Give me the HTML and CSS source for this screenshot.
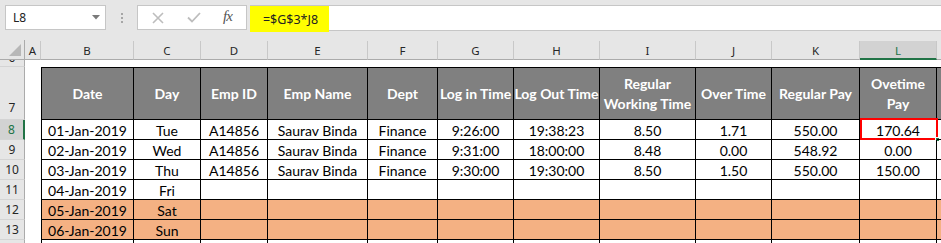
FILE: index.html
```html
<!DOCTYPE html>
<html>
<head>
<meta charset="utf-8">
<link rel="stylesheet" href="styles.css">
</head>
<body>
<div class="toolbar">
  <div class="namebox"><span>L8</span>
    <svg class="dd" width="8" height="5" viewBox="0 0 8 5"><path d="M0 0H8L4 4.5Z" fill="#7a7a7a"/></svg>
  </div>
  <div class="grip"><i></i><i></i><i></i></div>
  <div class="fbuttons">
    <svg class="fb-x" width="12" height="12" viewBox="0 0 12 12"><path d="M1 1L11 11M11 1L1 11" stroke="#bdbdbd" stroke-width="1.6" fill="none"/></svg>
    <svg class="fb-ok" width="14" height="11" viewBox="0 0 14 11"><path d="M1 5.5L5 9.5L13 1" stroke="#bdbdbd" stroke-width="1.8" fill="none"/></svg>
    <span class="fx">fx</span>
  </div>
  <div class="finput"><span class="formula">=$G$3*J8</span></div>
</div>

<div class="row colhead">
  <div class="corner"><svg width="12" height="12" viewBox="0 0 12 12"><path d="M12 0V12H0Z" fill="#b7b7b7"/></svg></div>
  <div class="ch">A</div><div class="ch">B</div><div class="ch">C</div><div class="ch">D</div><div class="ch">E</div><div class="ch">F</div><div class="ch">G</div><div class="ch">H</div><div class="ch">I</div><div class="ch">J</div><div class="ch">K</div><div class="ch sel">L</div><div class="ch"></div>
</div>

<div class="row r6">
  <div class="rh"><span>6</span></div>
</div>

<div class="row r7">
  <div class="rh"><span>7</span></div>
  <div class="ca"></div>
  <div class="c th first">Date</div>
  <div class="c th">Day</div>
  <div class="c th">Emp ID</div>
  <div class="c th">Emp Name</div>
  <div class="c th">Dept</div>
  <div class="c th">Log in Time</div>
  <div class="c th">Log Out Time</div>
  <div class="c th">Regular<br>Working Time</div>
  <div class="c th">Over Time</div>
  <div class="c th">Regular Pay</div>
  <div class="c th">Ovetime<br>Pay</div>
  <div class="c th"></div>
</div>

<div class="row">
  <div class="rh sel"><span>8</span></div>
  <div class="ca"></div>
  <div class="c first">01-Jan-2019</div>
  <div class="c">Tue</div>
  <div class="c">A14856</div>
  <div class="c">Saurav Binda</div>
  <div class="c">Finance</div>
  <div class="c">9:26:00</div>
  <div class="c">19:38:23</div>
  <div class="c">8.50</div>
  <div class="c">1.71</div>
  <div class="c">550.00</div>
  <div class="c active">170.64<span class="selbox"></span><span class="handle"></span></div>
  <div class="c"></div>
</div>

<div class="row">
  <div class="rh"><span>9</span></div>
  <div class="ca"></div>
  <div class="c first">02-Jan-2019</div>
  <div class="c">Wed</div>
  <div class="c">A14856</div>
  <div class="c">Saurav Binda</div>
  <div class="c">Finance</div>
  <div class="c">9:31:00</div>
  <div class="c">18:00:00</div>
  <div class="c">8.48</div>
  <div class="c">0.00</div>
  <div class="c">548.92</div>
  <div class="c">0.00</div>
  <div class="c"></div>
</div>

<div class="row">
  <div class="rh"><span>10</span></div>
  <div class="ca"></div>
  <div class="c first">03-Jan-2019</div>
  <div class="c">Thu</div>
  <div class="c">A14856</div>
  <div class="c">Saurav Binda</div>
  <div class="c">Finance</div>
  <div class="c">9:30:00</div>
  <div class="c">19:30:00</div>
  <div class="c">8.50</div>
  <div class="c">1.50</div>
  <div class="c">550.00</div>
  <div class="c">150.00</div>
  <div class="c"></div>
</div>

<div class="row">
  <div class="rh"><span>11</span></div>
  <div class="ca"></div>
  <div class="c first">04-Jan-2019</div>
  <div class="c">Fri</div>
  <div class="c"></div><div class="c"></div><div class="c"></div><div class="c"></div><div class="c"></div><div class="c"></div><div class="c"></div><div class="c"></div><div class="c"></div><div class="c"></div>
</div>

<div class="row wk">
  <div class="rh"><span>12</span></div>
  <div class="ca"></div>
  <div class="c first">05-Jan-2019</div>
  <div class="c">Sat</div>
  <div class="c"></div><div class="c"></div><div class="c"></div><div class="c"></div><div class="c"></div><div class="c"></div><div class="c"></div><div class="c"></div><div class="c"></div><div class="c"></div>
</div>

<div class="row wk">
  <div class="rh"><span>13</span></div>
  <div class="ca"></div>
  <div class="c first">06-Jan-2019</div>
  <div class="c">Sun</div>
  <div class="c"></div><div class="c"></div><div class="c"></div><div class="c"></div><div class="c"></div><div class="c"></div><div class="c"></div><div class="c"></div><div class="c"></div><div class="c"></div>
</div>

<div class="row">
  <div class="rh"></div>
  <div class="ca"></div>
  <div class="c first"></div>
  <div class="c"></div><div class="c"></div><div class="c"></div><div class="c"></div><div class="c"></div><div class="c"></div><div class="c"></div><div class="c"></div><div class="c"></div><div class="c"></div><div class="c"></div>
</div>
</body>
</html>
```

FILE: styles.css
```css
* { box-sizing: border-box; }
html, body {
  margin: 0;
  padding: 0;
  background: #ffffff;
  width: 941px;
  height: 243px;
  overflow: hidden;
}
body {
  font-family: Lato, "Liberation Sans", sans-serif;
  color: #000;
}

.toolbar {
  height: 40px;
  background: #e6e6e6;
  display: flex;
  align-items: flex-start;
  padding: 5px 0 0 5px;
}
.namebox {
  width: 101px;
  height: 25px;
  background: #fff;
  border: 1px solid #c6c6c6;
  display: flex;
  align-items: center;
  justify-content: space-between;
  padding: 0 5px 0 7px;
  font-family: "Noto Sans", sans-serif;
  font-size: 12px;
  color: #222;
}
.grip {
  width: 31px;
  height: 25px;
  display: flex;
  flex-direction: column;
  align-items: center;
  justify-content: center;
  gap: 2px;
}
.grip i {
  display: block;
  width: 2px;
  height: 2px;
  background: #a6a6a6;
}
.fbuttons {
  width: 110px;
  height: 25px;
  background: #fff;
  border: 1px solid #c6c6c6;
  display: flex;
  align-items: center;
  padding-left: 14px;
}
.fb-x { margin-right: 23px; }
.fb-ok { margin-right: 22px; }
.fx {
  font-family: "Liberation Serif", serif;
  font-style: italic;
  font-size: 15px;
  color: #555;
  letter-spacing: -1px;
  margin-top: -2px;
}
.finput {
  flex: 1;
  height: 26px;
  margin-left: 3px;
  background: #fff;
  border-top: 1px solid #c6c6c6;
  border-bottom: 1px solid #c6c6c6;
  display: flex;
}
.formula {
  width: 79px;
  height: 26px;
  background: #ffff00;
  display: flex;
  align-items: center;
  justify-content: center;
  font-family: "Noto Sans", sans-serif;
  font-size: 12.5px;
  color: #222;
  padding-left: 2px;
}

.row {
  display: grid;
  grid-template-columns: 25px 16px 93px 67px 67px 100px 70px 76px 86px 96px 76px 88px 77px 40px;
  height: 20px;
}

.colhead { height: 20px; background: #e6e6e6; }
.corner {
  border-right: 1px solid #ababab;
  border-bottom: 1px solid #ababab;
  display: flex;
  align-items: flex-end;
  justify-content: flex-end;
  padding: 0 3px 3px 0;
}
.ch {
  border-right: 1px solid #c8c8c8;
  border-bottom: 1px solid #ababab;
  margin-top: 1px;
  display: flex;
  align-items: center;
  justify-content: center;
  font-family: "Noto Sans", sans-serif;
  font-size: 11.5px;
  color: #262626;
  padding-top: 1px;
}
.ch.sel {
  background: #d2d2d2;
  color: #217346;
  border-bottom: 2px solid #217346;
}

.rh {
  background: #e6e6e6;
  border-right: 1px solid #ababab;
  border-bottom: 1px solid #d4d4d4;
  display: flex;
  align-items: flex-end;
  justify-content: center;
  font-family: "Noto Sans", sans-serif;
  font-size: 12px;
  color: #262626;
  padding-bottom: 2px;
  overflow: hidden;
  line-height: 15px;
}
.rh.sel {
  background: #d2d2d2;
  color: #217346;
  border-right: 2px solid #217346;
}
.r6 { height: 7px; }
.r6 .rh { padding-bottom: 0; align-items: flex-start; }
.r6 .rh span { margin-top: -10px; }
.r7 { height: 53px; }
.r7 .rh { padding-bottom: 4px; }

.ca { background: #fff; }
.c {
  border-right: 1px solid #000;
  border-bottom: 1px solid #000;
  display: flex;
  align-items: center;
  justify-content: center;
  text-align: center;
  font-size: 14px;
  white-space: nowrap;
  position: relative;
  padding-top: 1px;
}
.c.first { border-left: 1px solid #000; }
.th {
  background: #808080;
  color: #fff;
  font-weight: 700;
  border-top: 1px solid #000;
  line-height: 20px;
  font-size: 14px;
}
.wk .c { background: #f4b183; }

.selbox {
  position: absolute;
  left: 0;
  top: -2px;
  width: 78px;
  height: 22px;
  border: 2px solid #ff0000;
}
.handle {
  position: absolute;
  right: -4px;
  bottom: -3px;
  width: 5px;
  height: 5px;
  background: #217346;
  border: 1px solid #fff;
}
```
